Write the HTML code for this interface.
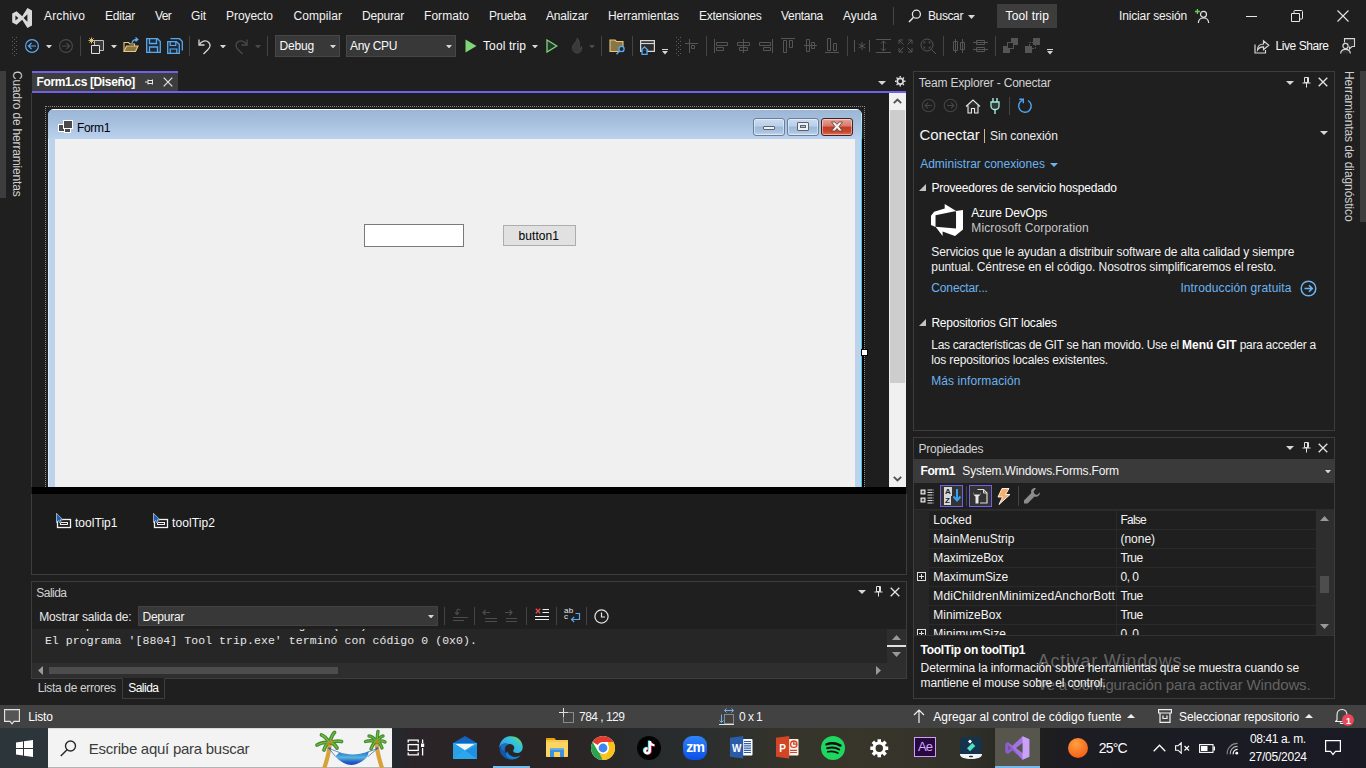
<!DOCTYPE html>
<html lang="es"><head><meta charset="utf-8"><title>Tool trip - Microsoft Visual Studio</title>
<style>
html,body{margin:0;padding:0;}
body{width:1366px;height:768px;overflow:hidden;background:#1f1f1f;position:relative;font-family:"Liberation Sans",sans-serif;}
.t{position:absolute;white-space:pre;line-height:1;display:block;}
.r{position:absolute;display:block;box-sizing:border-box;}
</style></head><body>
<svg class="r" style="left:11px;top:7px;" width="22" height="22" viewBox="0 0 22 22"><path d="M1.2 6.6 L5.6 4.2 L11.2 9.2 L16.4 1 L21 3.6 V18.4 L16.4 21 L11.2 12.8 L5.6 17.8 L1.2 15.4 Z M4.4 8.4 V13.6 L7.4 11 Z M16.4 7.2 L12.6 11 L16.4 14.8 Z" fill="#d9d9d9" fill-rule="evenodd"/></svg>
<span class="t" style="left:44.0px;top:10px;font-size:12px;color:#f2f2f2;letter-spacing:0.141px;">Archivo</span>
<span class="t" style="left:105.0px;top:10px;font-size:12px;color:#f2f2f2;letter-spacing:-0.225px;">Editar</span>
<span class="t" style="left:155.0px;top:10px;font-size:12px;color:#f2f2f2;letter-spacing:-0.671px;">Ver</span>
<span class="t" style="left:191.0px;top:10px;font-size:12px;color:#f2f2f2;letter-spacing:-0.111px;">Git</span>
<span class="t" style="left:226.0px;top:10px;font-size:12px;color:#f2f2f2;letter-spacing:-0.045px;">Proyecto</span>
<span class="t" style="left:293.5px;top:10px;font-size:12px;color:#f2f2f2;letter-spacing:0.061px;">Compilar</span>
<span class="t" style="left:362.0px;top:10px;font-size:12px;color:#f2f2f2;letter-spacing:-0.193px;">Depurar</span>
<span class="t" style="left:424.0px;top:10px;font-size:12px;color:#f2f2f2;letter-spacing:0.046px;">Formato</span>
<span class="t" style="left:489.0px;top:10px;font-size:12px;color:#f2f2f2;letter-spacing:-0.283px;">Prueba</span>
<span class="t" style="left:546.0px;top:10px;font-size:12px;color:#f2f2f2;letter-spacing:-0.169px;">Analizar</span>
<span class="t" style="left:608.0px;top:10px;font-size:12px;color:#f2f2f2;letter-spacing:-0.085px;">Herramientas</span>
<span class="t" style="left:699.0px;top:10px;font-size:12px;color:#f2f2f2;letter-spacing:-0.261px;">Extensiones</span>
<span class="t" style="left:781.0px;top:10px;font-size:12px;color:#f2f2f2;letter-spacing:-0.292px;">Ventana</span>
<span class="t" style="left:843.0px;top:10px;font-size:12px;color:#f2f2f2;letter-spacing:0.038px;">Ayuda</span>
<div class="r" style="left:893px;top:7px;width:1px;height:18px;background:#464646;"></div>
<svg class="r" style="left:908px;top:9px;" width="14" height="14" viewBox="0 0 14 14"><circle cx="8.4" cy="5.2" r="4" fill="none" stroke="#e6e6e6" stroke-width="1.3"/><path d="M5.6 8.2 L1 13" stroke="#e6e6e6" stroke-width="1.5"/></svg>
<span class="t" style="left:928.0px;top:10px;font-size:12px;color:#f2f2f2;letter-spacing:-0.391px;">Buscar</span>
<svg class="r" style="left:967.5px;top:15.0px;" width="7" height="4" viewBox="0 0 7 4"><path d="M0 0H7L3.5 4Z" fill="#d8d8d8"/></svg>
<div class="r" style="left:997px;top:4px;width:60px;height:24px;background:#3d3d3d;"></div>
<span class="t" style="left:1005.5px;top:10px;font-size:12px;color:#ffffff;letter-spacing:0.165px;">Tool trip</span>
<span class="t" style="left:1119.0px;top:10px;font-size:12px;color:#f2f2f2;letter-spacing:-0.145px;">Iniciar sesión</span>
<svg class="r" style="left:1194px;top:8px;" width="16" height="16" viewBox="0 0 16 16"><circle cx="9.5" cy="6.3" r="3" fill="none" stroke="#e0e0e0" stroke-width="1.2"/><path d="M4.3 15 C4.6 11.2 7 10 9.5 10 C12 10 14.4 11.2 14.7 15" fill="none" stroke="#e0e0e0" stroke-width="1.2"/><path d="M3.4 1 V6 M0.9 3.5 H5.9" stroke="#6ccb5f" stroke-width="1.3"/></svg>
<div class="r" style="left:1246px;top:16px;width:11px;height:1px;background:#e6e6e6;"></div>
<svg class="r" style="left:1291px;top:10px;" width="12" height="12" viewBox="0 0 12 12"><path d="M0.5 3.5 H8.5 V11.5 H0.5 Z" fill="none" stroke="#e6e6e6"/><path d="M3 3.5 V1.2 Q3 0.5 3.8 0.5 H10.5 Q11.5 0.5 11.5 1.5 V8.2 Q11.5 9 10.8 9 H8.6" fill="none" stroke="#e6e6e6"/></svg>
<svg class="r" style="left:1337px;top:10px;" width="12" height="12" viewBox="0 0 12 12"><path d="M0.5 0.5 L11.5 11.5 M11.5 0.5 L0.5 11.5" stroke="#e6e6e6" stroke-width="1.1"/></svg>
<svg class="r" style="left:12px;top:37px;" width="6" height="20" viewBox="0 0 6 20"><rect x="0" y="0" width="1" height="1" fill="#5c5c5c"/><rect x="2" y="2" width="1" height="1" fill="#5c5c5c"/><rect x="4" y="0" width="1" height="1" fill="#5c5c5c"/><rect x="0" y="4" width="1" height="1" fill="#5c5c5c"/><rect x="2" y="6" width="1" height="1" fill="#5c5c5c"/><rect x="4" y="4" width="1" height="1" fill="#5c5c5c"/><rect x="0" y="8" width="1" height="1" fill="#5c5c5c"/><rect x="2" y="10" width="1" height="1" fill="#5c5c5c"/><rect x="4" y="8" width="1" height="1" fill="#5c5c5c"/><rect x="0" y="12" width="1" height="1" fill="#5c5c5c"/><rect x="2" y="14" width="1" height="1" fill="#5c5c5c"/><rect x="4" y="12" width="1" height="1" fill="#5c5c5c"/><rect x="0" y="16" width="1" height="1" fill="#5c5c5c"/><rect x="2" y="18" width="1" height="1" fill="#5c5c5c"/><rect x="4" y="16" width="1" height="1" fill="#5c5c5c"/></svg>
<svg class="r" style="left:24px;top:38px;" width="16" height="16" viewBox="0 0 16 16"><circle cx="8" cy="8" r="6.4" fill="none" stroke="#58a9f0" stroke-width="1.2"/><path d="M12 8H4.6M7.6 4.8L4.4 8L7.6 11.2" fill="none" stroke="#58a9f0" stroke-width="1.2"/></svg>
<svg class="r" style="left:46.0px;top:44.75px;" width="6" height="3.5" viewBox="0 0 6 3.5"><path d="M0 0H6L3.0 3.5Z" fill="#d6d6d6"/></svg>
<svg class="r" style="left:58px;top:38px;" width="16" height="16" viewBox="0 0 16 16"><circle cx="8" cy="8" r="6.4" fill="none" stroke="#4a4a4a" stroke-width="1.1"/><path d="M4 8H11.4M8.4 4.8L11.6 8L8.4 11.2" fill="none" stroke="#4a4a4a" stroke-width="1.1"/></svg>
<div class="r" style="left:80px;top:36px;width:1px;height:20px;background:#444444;"></div>
<svg class="r" style="left:88px;top:37px;" width="18" height="18" viewBox="0 0 18 18"><path d="M6.5 3.5H15.5V13.500H6.5Z" fill="#3a3a3a" stroke="#bdbdbd"/><path d="M3.5 8.500H11.500V16.5H3.5Z" fill="#2b2b2b" stroke="#e0e0e0"/><path d="M3.5 0.500V6.500M0.500 3.500H6.500M1.400 1.400L5.600 5.600M5.600 1.400L1.400 5.600" stroke="#f2d27a" stroke-width="0.900"/></svg>
<svg class="r" style="left:111.0px;top:44.75px;" width="6" height="3.5" viewBox="0 0 6 3.5"><path d="M0 0H6L3.0 3.5Z" fill="#d6d6d6"/></svg>
<svg class="r" style="left:123px;top:37px;" width="17" height="17" viewBox="0 0 17 17"><path d="M1 14.500V5.500H5.500L7 7H11.500V9" fill="none" stroke="#e8c77b" stroke-width="1.1"/><path d="M1 14.500L3.500 9H15L12.500 14.500Z" fill="#8a7546" stroke="#e8c77b" stroke-width="1.1"/><path d="M9 6.500C9 3.500 11.500 2.500 14.500 2.500M12.500 0.500L14.800 2.500L12.500 4.600" fill="none" stroke="#58a9f0" stroke-width="1.3"/></svg>
<svg class="r" style="left:146px;top:38px;" width="15" height="15" viewBox="0 0 15 15"><path d="M0.700 0.700H11.500L14.300 3.500V14.300H0.700Z" fill="#1f2a36" stroke="#58a9f0" stroke-width="1.300"/><path d="M3.500 0.700V5.500H10.500V0.700M3.500 14.300V9H11.500V14.300" fill="none" stroke="#58a9f0" stroke-width="1.300"/></svg>
<svg class="r" style="left:167px;top:38px;" width="16" height="16" viewBox="0 0 16 16"><path d="M0.700 3.700H9.500L12.300 6.300V15.300H0.700Z" fill="#1f2a36" stroke="#58a9f0" stroke-width="1.300"/><path d="M3.200 3.700V7.500H8.800V3.700M3.200 15.300V11H9.800V15.300" fill="none" stroke="#58a9f0" stroke-width="1.200"/><path d="M3.500 0.700H12.500L15.300 3.500V12.500" fill="none" stroke="#58a9f0" stroke-width="1.300"/></svg>
<div class="r" style="left:189px;top:36px;width:1px;height:20px;background:#444444;"></div>
<svg class="r" style="left:197px;top:38px;" width="16" height="17" viewBox="0 0 16 17"><path d="M2 1.500V7H7.500" fill="none" stroke="#d6d6d6" stroke-width="1.300"/><path d="M2.300 6.800C4 3 9 1.500 11.800 4.500C14 7 13 9.500 11 11.500L6.500 16" fill="none" stroke="#d6d6d6" stroke-width="1.300"/></svg>
<svg class="r" style="left:219.5px;top:44.75px;" width="6" height="3.5" viewBox="0 0 6 3.5"><path d="M0 0H6L3.0 3.5Z" fill="#d6d6d6"/></svg>
<svg class="r" style="left:233px;top:38px;" width="16" height="17" viewBox="0 0 16 17"><path d="M14 1.500V7H8.500" fill="none" stroke="#4a4a4a" stroke-width="1.300"/><path d="M13.700 6.800C12 3 7 1.500 4.200 4.500C2 7 3 9.500 5 11.500L9.500 16" fill="none" stroke="#4a4a4a" stroke-width="1.300"/></svg>
<svg class="r" style="left:254.5px;top:44.75px;" width="6" height="3.5" viewBox="0 0 6 3.5"><path d="M0 0H6L3.0 3.5Z" fill="#4a4a4a"/></svg>
<div class="r" style="left:267px;top:36px;width:1px;height:20px;background:#444444;"></div>
<div class="r" style="left:275px;top:35px;width:65px;height:22px;background:#383838;border:1px solid #474747;"></div>
<span class="t" style="left:279.5px;top:40px;font-size:12px;color:#fafafa;letter-spacing:-0.172px;">Debug</span>
<svg class="r" style="left:330.0px;top:44.75px;" width="6" height="3.5" viewBox="0 0 6 3.5"><path d="M0 0H6L3.0 3.5Z" fill="#d6d6d6"/></svg>
<div class="r" style="left:346px;top:35px;width:110px;height:22px;background:#383838;border:1px solid #474747;"></div>
<span class="t" style="left:350.0px;top:40px;font-size:12px;color:#fafafa;letter-spacing:-0.335px;">Any CPU</span>
<svg class="r" style="left:446.0px;top:44.75px;" width="6" height="3.5" viewBox="0 0 6 3.5"><path d="M0 0H6L3.0 3.5Z" fill="#d6d6d6"/></svg>
<svg class="r" style="left:465px;top:39px;" width="12" height="14" viewBox="0 0 12 14"><path d="M0.500 0.500L11.500 7L0.500 13.500Z" fill="#7fd67a"/></svg>
<span class="t" style="left:483.0px;top:40px;font-size:12px;color:#fafafa;letter-spacing:0.109px;">Tool trip</span>
<svg class="r" style="left:532.0px;top:44.75px;" width="6" height="3.5" viewBox="0 0 6 3.5"><path d="M0 0H6L3.0 3.5Z" fill="#d6d6d6"/></svg>
<svg class="r" style="left:546px;top:39px;" width="12" height="14" viewBox="0 0 12 14"><path d="M1 1L10.800 7L1 13Z" fill="#23372a" stroke="#7fd67a" stroke-width="1.300"/></svg>
<svg class="r" style="left:568px;top:37px;" width="16" height="17" viewBox="0 0 16 17"><path d="M9 1C10 4 5 6 4.500 10C4 14 7 16 9 16C12 16 14.500 13.500 13.500 9.500C13 11 12 11.500 11 11.500C12 8 12 4 9 1Z" fill="#3a3a3a" stroke="#4a4a4a" stroke-width="0.800"/></svg>
<svg class="r" style="left:589.0px;top:44.75px;" width="6" height="3.5" viewBox="0 0 6 3.5"><path d="M0 0H6L3.0 3.5Z" fill="#4a4a4a"/></svg>
<div class="r" style="left:601px;top:36px;width:1px;height:20px;background:#444444;"></div>
<svg class="r" style="left:609px;top:38px;" width="17" height="17" viewBox="0 0 17 17"><path d="M1 13.500V2H6L7.500 3.500H14V13.500Z" fill="#8a7546" stroke="#e8c77b" stroke-width="1.100"/><circle cx="12.500" cy="11" r="2.600" fill="#1f2a36" stroke="#58a9f0" stroke-width="1.300"/><path d="M10.600 13L7.500 16.300" stroke="#58a9f0" stroke-width="1.400"/></svg>
<div class="r" style="left:632px;top:36px;width:1px;height:20px;background:#444444;"></div>
<svg class="r" style="left:640px;top:40px;" width="15" height="15" viewBox="0 0 15 15"><path d="M0.600 0.600H14.400V11.400H0.600Z" fill="#2b2b2b" stroke="#d6d6d6" stroke-width="1.200"/><path d="M0.600 3.500H14.400" stroke="#d6d6d6" stroke-width="1.200"/><path d="M0.800 10.500L4.500 7L8.200 10.500M2 10V14.300H7V10" fill="#1f1f1f" stroke="#58a9f0" stroke-width="1.300"/></svg>
<div class="r" style="left:662px;top:49px;width:6px;height:1px;background:#d6d6d6;"></div>
<svg class="r" style="left:662.0px;top:51.25px;" width="6" height="3.5" viewBox="0 0 6 3.5"><path d="M0 0H6L3.0 3.5Z" fill="#d6d6d6"/></svg>
<svg class="r" style="left:676px;top:37px;" width="6" height="20" viewBox="0 0 6 20"><rect x="0" y="0" width="1" height="1" fill="#5c5c5c"/><rect x="2" y="2" width="1" height="1" fill="#5c5c5c"/><rect x="4" y="0" width="1" height="1" fill="#5c5c5c"/><rect x="0" y="4" width="1" height="1" fill="#5c5c5c"/><rect x="2" y="6" width="1" height="1" fill="#5c5c5c"/><rect x="4" y="4" width="1" height="1" fill="#5c5c5c"/><rect x="0" y="8" width="1" height="1" fill="#5c5c5c"/><rect x="2" y="10" width="1" height="1" fill="#5c5c5c"/><rect x="4" y="8" width="1" height="1" fill="#5c5c5c"/><rect x="0" y="12" width="1" height="1" fill="#5c5c5c"/><rect x="2" y="14" width="1" height="1" fill="#5c5c5c"/><rect x="4" y="12" width="1" height="1" fill="#5c5c5c"/><rect x="0" y="16" width="1" height="1" fill="#5c5c5c"/><rect x="2" y="18" width="1" height="1" fill="#5c5c5c"/><rect x="4" y="16" width="1" height="1" fill="#5c5c5c"/></svg>
<svg class="r" style="left:685px;top:39px;" width="13" height="14" viewBox="0 0 13 14"><path d="M0 4.500H13M4.500 0V14M6.500 6.500H9.500V9.500H6.500Z" fill="none" stroke="#555555"/></svg>
<div class="r" style="left:706px;top:36px;width:1px;height:20px;background:#444444;"></div>
<svg class="r" style="left:714px;top:39px;" width="15" height="14" viewBox="0 0 15 14"><path d="M0.500 0V14M2.500 3.500H13.500V6.500H2.500ZM2.500 8.500H9.500V11.500H2.500Z" fill="none" stroke="#555555"/></svg>
<svg class="r" style="left:737px;top:39px;" width="13" height="14" viewBox="0 0 13 14"><path d="M6.500 0V14M0.500 3.500H12.500V6.500H0.500ZM2.500 8.500H10.500V11.500H2.500Z" fill="none" stroke="#555555"/></svg>
<svg class="r" style="left:758px;top:39px;" width="15" height="14" viewBox="0 0 15 14"><path d="M14.500 0V14M1.500 3.500H12.500V6.500H1.500ZM5.500 8.500H12.500V11.500H5.500Z" fill="none" stroke="#555555"/></svg>
<svg class="r" style="left:781px;top:38px;" width="14" height="15" viewBox="0 0 14 15"><path d="M0 0.500H14M2.500 2.500H5.500V14.500H2.500ZM8.500 2.500H11.500V9.500H8.500Z" fill="none" stroke="#555555"/></svg>
<svg class="r" style="left:804px;top:39px;" width="13" height="13" viewBox="0 0 13 13"><path d="M0 6.500H13M2.500 0.500H5.500V12.500H2.500ZM7.500 3.500H10.500V9.500H7.500Z" fill="none" stroke="#555555"/></svg>
<svg class="r" style="left:825px;top:38px;" width="14" height="15" viewBox="0 0 14 15"><path d="M0 14.500H14M2.500 0.500H5.500V12.500H2.500ZM8.500 5.500H11.500V12.500H8.500Z" fill="none" stroke="#555555"/></svg>
<div class="r" style="left:847px;top:36px;width:1px;height:20px;background:#444444;"></div>
<svg class="r" style="left:854px;top:39px;" width="16" height="14" viewBox="0 0 16 14"><path d="M0.500 1V13M15.500 1V13M8 3V11M4.600 5L11.400 9M11.400 5L4.600 9" fill="none" stroke="#555555"/></svg>
<svg class="r" style="left:876px;top:39px;" width="15" height="14" viewBox="0 0 15 14"><path d="M0 0.500H15M0 13.500H15M7.500 2V12M5 4.500L7.500 2L10 4.500M5 9.500L7.500 12L10 9.500" fill="none" stroke="#555555"/></svg>
<svg class="r" style="left:898px;top:39px;" width="15" height="14" viewBox="0 0 15 14"><path d="M1 5V1H5M10 1H14V5M14 9V13H10M5 13H1V9M1 1L5.500 5.500M14 1L9.500 5.500M14 13L9.500 8.500M1 13L5.500 8.500" fill="none" stroke="#555555"/></svg>
<svg class="r" style="left:920px;top:38px;" width="17" height="17" viewBox="0 0 17 17"><circle cx="7" cy="7" r="6" fill="none" stroke="#555555"/><path d="M4 5.500V4H5.500M8.500 4H10V5.500M10 8.500V10H8.500M5.500 10H4V8.500M11.500 11.500L16 16" fill="none" stroke="#555555"/></svg>
<div class="r" style="left:943px;top:36px;width:1px;height:20px;background:#444444;"></div>
<svg class="r" style="left:952px;top:39px;" width="14" height="14" viewBox="0 0 14 14"><path d="M3.500 0V14M10.500 0V14M1.500 2.500H5.500V11.500H1.500ZM8.500 3.500H12.500V10.500H8.500Z" fill="none" stroke="#555555"/></svg>
<svg class="r" style="left:973px;top:39px;" width="15" height="14" viewBox="0 0 15 14"><path d="M0 3.500H15M0 10.500H15M3.500 1.500H11.500V5.500H3.500ZM3.500 8.500H11.500V12.500H3.500Z" fill="none" stroke="#555555"/></svg>
<div class="r" style="left:995px;top:36px;width:1px;height:20px;background:#444444;"></div>
<svg class="r" style="left:1003px;top:38px;" width="15" height="15" viewBox="0 0 15 15"><rect x="8" y="0" width="7" height="7" fill="#555555"/><rect x="0" y="8" width="7" height="7" fill="#555555"/><rect x="4.500" y="4.500" width="6" height="6" fill="#1f1f1f" stroke="#555555"/></svg>
<svg class="r" style="left:1025px;top:38px;" width="15" height="15" viewBox="0 0 15 15"><rect x="8" y="0" width="7" height="7" fill="#555555"/><rect x="0" y="8" width="7" height="7" fill="#555555"/><path d="M4.500 8V4.500H8M7 10.500H10.500V7" fill="none" stroke="#555555" stroke-dasharray="2 1"/></svg>
<div class="r" style="left:1047px;top:49px;width:6px;height:1px;background:#d6d6d6;"></div>
<svg class="r" style="left:1047.0px;top:51.25px;" width="6" height="3.5" viewBox="0 0 6 3.5"><path d="M0 0H6L3.0 3.5Z" fill="#d6d6d6"/></svg>
<svg class="r" style="left:1254px;top:39px;" width="16" height="15" viewBox="0 0 16 15"><path d="M1 5.500V14H11.500V11" fill="none" stroke="#d6d6d6" stroke-width="1.200"/><path d="M3.500 11C3.500 7 6 5 9.500 5V1.800L14.800 6.300L9.500 10.800V7.800C7 7.800 5 8.500 3.500 11Z" fill="#2b2b2b" stroke="#d6d6d6" stroke-width="1.200"/></svg>
<span class="t" style="left:1275.5px;top:40px;font-size:12px;color:#fafafa;letter-spacing:-0.437px;">Live Share</span>
<svg class="r" style="left:1340px;top:38px;" width="16" height="16" viewBox="0 0 16 16"><path d="M4.500 4.500V0.600H14.500V8.500H12L9.500 11V8.500" fill="#2b2b2b" stroke="#d6d6d6" stroke-width="1.100"/><circle cx="5.500" cy="8" r="2.600" fill="#1f1f1f" stroke="#d6d6d6" stroke-width="1.200"/><path d="M0.600 15.500C0.800 12.500 3 11.300 5.500 11.300C8 11.300 10.200 12.500 10.400 15.500" fill="#2b2b2b" stroke="#d6d6d6" stroke-width="1.200"/></svg>
<div class="r" style="left:0px;top:71px;width:6px;height:127px;background:#3d3d3d;"></div>
<div class="t" style="left:10px;top:71px;width:14px;height:127px;writing-mode:vertical-rl;font-size:12px;line-height:14px;color:#cfcfcf;letter-spacing:-0.177px;">Cuadro de herramientas</div>
<div class="r" style="left:32px;top:71px;width:146px;height:22px;background:#3d3d3d;border-top:2px solid #7160e8;"></div>
<span class="t" style="left:36.5px;top:76px;font-size:12px;color:#ffffff;letter-spacing:-0.364px;font-weight:bold;">Form1.cs [Diseño]</span>
<svg class="r" style="left:145px;top:78px;" width="9" height="8" viewBox="0 0 9 8"><path d="M0 4H3M3 1.500V6.500M3 2.500H7.500V5.500H3M7.500 1.500V6.500" fill="none" stroke="#e6e6e6" stroke-width="1"/></svg>
<svg class="r" style="left:163px;top:77px;" width="10" height="10" viewBox="0 0 10 10"><path d="M0.700 0.700L9.300 9.300M9.300 0.700L0.700 9.300" stroke="#e6e6e6" stroke-width="1.200"/></svg>
<div class="r" style="left:32px;top:91px;width:874px;height:2px;background:#7160e8;"></div>
<svg class="r" style="left:877.5px;top:80.5px;" width="8" height="4" viewBox="0 0 8 4"><path d="M0 0H8L4.0 4Z" fill="#d6d6d6"/></svg>
<svg class="r" style="left:895px;top:76px;" width="10.5" height="10.5" viewBox="0 0 12 12"><circle cx="6" cy="6" r="3.300" fill="none" stroke="#dcdcdc" stroke-width="2"/><path d="M6 0V12M0 6H12M1.800 1.800L10.200 10.200M10.200 1.800L1.800 10.200" stroke="#dcdcdc" stroke-width="1.600" stroke-dasharray="1.800 8.400 1.800 0"/><circle cx="6" cy="6" r="1.500" fill="#1f1f1f"/></svg>
<div class="r" style="left:31px;top:93px;width:858px;height:394px;background:#1e1e1e;border-left:1px solid #3d3d3d;"></div>
<div class="r" style="left:45px;top:106px;width:820px;height:390px;background:transparent;border:1px dotted #8a8a8a;border-bottom:none;height:381px;"></div>
<div class="r" style="left:48px;top:109px;width:814px;height:378px;background:#bdd3ec;border-top-left-radius:6px;border-top-right-radius:6px;overflow:hidden;"><div class="r" style="left:0;top:0;width:814px;height:30px;background:linear-gradient(#9cb6d6 0%,#a7c0de 45%,#bad2ee 100%);border-top:1px solid #ffffff;"></div><div class="r" style="left:0;top:30px;width:1px;height:348px;background:#dce9f7;"></div><div class="r" style="left:813px;top:4px;width:1px;height:374px;background:linear-gradient(#bfeaf9 0px,#6ad6f3 26px,#35c7ea 27px);"></div><div class="r" style="left:7px;top:30px;width:800px;height:348px;background:#f0f0f0;"></div></div>
<div class="r" style="left:862px;top:139px;width:2px;height:348px;background:#000000;"></div>
<svg class="r" style="left:58px;top:120px;" width="15" height="13" viewBox="0 0 15 13"><rect x="0.500" y="4.500" width="6" height="7" fill="#4a4a4a" stroke="#ffffff"/><rect x="5.500" y="0.500" width="9" height="8" fill="#4a4a4a" stroke="#ffffff"/><rect x="6.500" y="8.500" width="6" height="4" fill="#4a4a4a" stroke="#ffffff"/></svg>
<span class="t" style="left:77.0px;top:122px;font-size:12px;color:#000000;letter-spacing:-0.334px;">Form1</span>
<div class="r" style="left:753px;top:118px;width:32px;height:18px;background:linear-gradient(#c9dcf2 0%,#b9cfe9 45%,#9db8d9 50%,#a9c2e0 80%,#c3d7ef 100%);border:1px solid #6c7f99;border-radius:3px;box-shadow:inset 0 0 0 1px rgba(255,255,255,0.45);"></div>
<div class="r" style="left:787px;top:118px;width:32px;height:18px;background:linear-gradient(#c9dcf2 0%,#b9cfe9 45%,#9db8d9 50%,#a9c2e0 80%,#c3d7ef 100%);border:1px solid #6c7f99;border-radius:3px;box-shadow:inset 0 0 0 1px rgba(255,255,255,0.45);"></div>
<div class="r" style="left:821px;top:118px;width:32px;height:18px;background:linear-gradient(#e3a79b 0%,#d6776a 45%,#c23b22 50%,#c8482e 80%,#d9735c 100%);border:1px solid #4a1c1c;border-radius:3px;box-shadow:inset 0 0 0 1px rgba(255,255,255,0.45);"></div>
<div class="r" style="left:763px;top:126px;width:12px;height:4px;background:#f0f0f0;border:1px solid #5a6170;border-radius:1px;"></div>
<div class="r" style="left:797px;top:122px;width:12px;height:9px;background:#f0f0f0;border:1px solid #5a6170;border-radius:1px;"></div>
<div class="r" style="left:800px;top:125px;width:6px;height:3px;background:#a9c2e0;border:1px solid #5a6170;"></div>
<svg class="r" style="left:830px;top:121px;" width="14" height="11" viewBox="0 0 14 11"><path d="M1.500 1L5 1L7 3.400L9 1L12.500 1L9 5.500L12.500 10L9 10L7 7.600L5 10L1.500 10L5 5.500Z" fill="#f4f4f4" stroke="#5c3a3a" stroke-width="0.800"/></svg>
<div class="r" style="left:364px;top:224px;width:100px;height:23px;background:#ffffff;border:1px solid #7a7a7a;"></div>
<div class="r" style="left:503px;top:225px;width:73px;height:21px;background:#e1e1e1;border:1px solid #adadad;"></div>
<span class="t" style="left:518.5px;top:230px;font-size:12px;color:#000000;letter-spacing:0.066px;">button1</span>
<div class="r" style="left:861px;top:349px;width:7px;height:7px;background:#ffffff;border:1px solid #000000;"></div>
<div class="r" style="left:889px;top:93px;width:17px;height:394px;background:#f0f0f0;"></div>
<div class="r" style="left:890px;top:110px;width:15px;height:273px;background:#cdcdcd;"></div>
<svg class="r" style="left:893px;top:98px;" width="9" height="6" viewBox="0 0 9 6"><path d="M0.800 5.200L4.500 1.500L8.200 5.200" fill="none" stroke="#505050" stroke-width="1.800"/></svg>
<svg class="r" style="left:893px;top:476px;" width="9" height="6" viewBox="0 0 9 6"><path d="M0.800 0.800L4.500 4.500L8.200 0.800" fill="none" stroke="#505050" stroke-width="1.800"/></svg>
<div class="r" style="left:32px;top:487px;width:874px;height:7px;background:#000000;"></div>
<div class="r" style="left:31px;top:494px;width:876px;height:81px;background:#1c1c1c;border-left:1px solid #3d3d3d;border-bottom:1px solid #3d3d3d;border-right:1px solid #3d3d3d;"></div>
<svg class="r" style="left:56px;top:513px;" width="16" height="16" viewBox="0 0 16 16"><rect x="1.500" y="6.500" width="13" height="8" fill="#1c1c1c" stroke="#f2f2f2" stroke-width="1.300"/><rect x="4.500" y="9.500" width="7" height="2" fill="none" stroke="#f2f2f2" stroke-width="1"/><path d="M0.500 0.300V9.500L2.600 7.600L4 10.300L5.400 9.600L4.100 7L7 6.800Z" fill="#1d5fb4" stroke="#f2f2f2" stroke-width="0.600"/></svg>
<span class="t" style="left:75.0px;top:517px;font-size:12px;color:#fafafa;letter-spacing:0.032px;">toolTip1</span>
<svg class="r" style="left:153px;top:513px;" width="16" height="16" viewBox="0 0 16 16"><rect x="1.500" y="6.500" width="13" height="8" fill="#1c1c1c" stroke="#f2f2f2" stroke-width="1.300"/><rect x="4.500" y="9.500" width="7" height="2" fill="none" stroke="#f2f2f2" stroke-width="1"/><path d="M0.500 0.300V9.500L2.600 7.600L4 10.300L5.400 9.600L4.100 7L7 6.800Z" fill="#1d5fb4" stroke="#f2f2f2" stroke-width="0.600"/></svg>
<span class="t" style="left:172.0px;top:517px;font-size:12px;color:#fafafa;letter-spacing:0.095px;">toolTip2</span>
<div class="r" style="left:31px;top:581px;width:876px;height:98px;background:#1f1f1f;border:1px solid #3d3d3d;"></div>
<span class="t" style="left:36.3px;top:587px;font-size:12px;color:#d2d2d2;letter-spacing:-0.526px;">Salida</span>
<svg class="r" style="left:857.5px;top:590.0px;" width="8" height="4" viewBox="0 0 8 4"><path d="M0 0H8L4.0 4Z" fill="#d6d6d6"/></svg>
<svg class="r" style="left:874px;top:586px;" width="9" height="11" viewBox="0 0 9 11"><path d="M2.500 0.500H6.500V5.500H2.500ZM5.500 0.500V5.500M0.500 6H8.500M4.500 6V10.500" fill="none" stroke="#e0e0e0" stroke-width="1"/></svg>
<svg class="r" style="left:890px;top:587px;" width="10" height="10" viewBox="0 0 10 10"><path d="M0.700 0.700L9.300 9.300M9.300 0.700L0.700 9.300" stroke="#e6e6e6" stroke-width="1.300"/></svg>
<span class="t" style="left:39.3px;top:611px;font-size:12px;color:#e8e8e8;letter-spacing:-0.176px;">Mostrar salida de:</span>
<div class="r" style="left:138px;top:606px;width:300px;height:20px;background:#383838;border:1px solid #434343;"></div>
<span class="t" style="left:142.5px;top:611px;font-size:12px;color:#f4f4f4;letter-spacing:-0.236px;">Depurar</span>
<svg class="r" style="left:427.5px;top:614.75px;" width="6" height="3.5" viewBox="0 0 6 3.5"><path d="M0 0H6L3.0 3.5Z" fill="#d6d6d6"/></svg>
<div class="r" style="left:444px;top:607px;width:1px;height:18px;background:#444444;"></div>
<div class="r" style="left:474px;top:607px;width:1px;height:18px;background:#444444;"></div>
<div class="r" style="left:526px;top:607px;width:1px;height:18px;background:#444444;"></div>
<div class="r" style="left:556px;top:607px;width:1px;height:18px;background:#444444;"></div>
<div class="r" style="left:586px;top:607px;width:1px;height:18px;background:#444444;"></div>
<svg class="r" style="left:453px;top:608px;" width="15" height="15" viewBox="0 0 15 15"><path d="M4 6V2.500C4 0.800 7 0.800 7 2.500M2 4.500L4 6.500L6 4.500M0 9.500H15M0 12.500H11" fill="none" stroke="#4c4c4c" stroke-width="1.200"/></svg>
<svg class="r" style="left:482px;top:609px;" width="15" height="14" viewBox="0 0 15 14"><path d="M1 3.500H8M3.500 1L1 3.500L3.500 6M3 9.500H15M3 12.500H15" fill="none" stroke="#4c4c4c" stroke-width="1.200"/></svg>
<svg class="r" style="left:504px;top:609px;" width="15" height="14" viewBox="0 0 15 14"><path d="M1 3.500H8M5.500 1L8 3.500L5.500 6M2 9.500H13M2 12.500H13" fill="none" stroke="#4c4c4c" stroke-width="1.200"/></svg>
<svg class="r" style="left:535px;top:608px;" width="15" height="15" viewBox="0 0 15 15"><path d="M7.500 1.500H14M7.500 4.500H14M0 8.500H14M0 11.500H14" stroke="#f0f0f0" stroke-width="1"/><path d="M0.800 0.800L5.200 5.200M5.200 0.800L0.800 5.200" stroke="#e5484d" stroke-width="1.400"/></svg>
<span class="t" style="left:564px;top:608px;font-size:8px;line-height:6px;color:#e8e8e8;letter-spacing:0.3px;">ab<br>c</span>
<svg class="r" style="left:570px;top:612px;" width="11" height="11" viewBox="0 0 11 11"><path d="M5.500 1.500H9.500V7.500H1.500M4.200 4.800L1.500 7.500L4.200 10.200" fill="none" stroke="#58a9f0" stroke-width="1.200"/></svg>
<svg class="r" style="left:594px;top:609px;" width="15" height="15" viewBox="0 0 15 15"><circle cx="7.500" cy="7.500" r="6.600" fill="none" stroke="#e8e8e8" stroke-width="1.200"/><path d="M7.500 3.500V8H11" fill="none" stroke="#e8e8e8" stroke-width="1.200"/></svg>
<div class="r" style="left:32px;top:629px;width:855px;height:34px;background:#262626;overflow:hidden;"></div>
<div class="r" style="left:32px;top:629px;width:855px;height:34px;overflow:hidden;">
<span class="t" style="left:12.9px;top:-9px;font-size:11.5px;color:#e6e6e6;letter-spacing:-0.045px;font-family:'Liberation Mono',monospace;">El subproceso 0x4f28 terminó con código 0 (0x0).</span>
<span class="t" style="left:12.9px;top:6px;font-size:11.5px;color:#e6e6e6;letter-spacing:0.068px;font-family:'Liberation Mono',monospace;">El programa '[8804] Tool trip.exe' terminó con código 0 (0x0).</span>
</div>
<div class="r" style="left:887px;top:629px;width:19px;height:34px;background:#2e2e2e;"></div>
<svg class="r" style="left:892px;top:635px;" width="9" height="5" viewBox="0 0 9 5"><path d="M0 5H9L4.500 0Z" fill="#999999"/></svg>
<div class="r" style="left:887px;top:645px;width:19px;height:2px;background:#e0e0e0;"></div>
<svg class="r" style="left:892px;top:652px;" width="9" height="5" viewBox="0 0 9 5"><path d="M0 0H9L4.500 5Z" fill="#999999"/></svg>
<div class="r" style="left:32px;top:663px;width:874px;height:15px;background:#2e2e2e;"></div>
<div class="r" style="left:49px;top:667px;width:289px;height:7px;background:#4d4d4d;"></div>
<svg class="r" style="left:38px;top:666px;" width="5" height="9" viewBox="0 0 5 9"><path d="M5 0V9L0 4.500Z" fill="#999999"/></svg>
<svg class="r" style="left:876px;top:666px;" width="5" height="9" viewBox="0 0 5 9"><path d="M0 0V9L5 4.500Z" fill="#999999"/></svg>
<span class="t" style="left:37.7px;top:682px;font-size:12px;color:#d2d2d2;letter-spacing:-0.336px;">Lista de errores</span>
<div class="r" style="left:122px;top:678px;width:43px;height:21px;background:#1f1f1f;border:1px solid #3d3d3d;border-top:1px solid #1f1f1f;"></div>
<span class="t" style="left:128.2px;top:682px;font-size:12px;color:#ffffff;letter-spacing:-0.509px;">Salida</span>
<div class="r" style="left:913px;top:71px;width:422px;height:360px;background:#1f1f1f;border:1px solid #3d3d3d;"></div>
<span class="t" style="left:918.8px;top:77px;font-size:12px;color:#d2d2d2;letter-spacing:-0.197px;">Team Explorer - Conectar</span>
<svg class="r" style="left:1286.0px;top:80.5px;" width="8" height="4" viewBox="0 0 8 4"><path d="M0 0H8L4.0 4Z" fill="#d6d6d6"/></svg>
<svg class="r" style="left:1302px;top:77px;" width="9" height="11" viewBox="0 0 9 11"><path d="M2.500 0.500H6.500V5.500H2.500ZM5.500 0.500V5.500M0.500 6H8.500M4.500 6V10.500" fill="none" stroke="#e0e0e0" stroke-width="1"/></svg>
<svg class="r" style="left:1318px;top:77px;" width="10" height="10" viewBox="0 0 10 10"><path d="M0.700 0.700L9.300 9.300M9.300 0.700L0.700 9.300" stroke="#e6e6e6" stroke-width="1.300"/></svg>
<svg class="r" style="left:921px;top:98px;" width="15" height="15" viewBox="0 0 15 15"><circle cx="7.500" cy="7.500" r="6.300" fill="none" stroke="#454545" stroke-width="1.100"/><path d="M11 7.500H4.300M7 4.600L4.100 7.500L7 10.400" fill="none" stroke="#454545" stroke-width="1.100"/></svg>
<svg class="r" style="left:943px;top:98px;" width="15" height="15" viewBox="0 0 15 15"><circle cx="7.500" cy="7.500" r="6.300" fill="none" stroke="#454545" stroke-width="1.100"/><path d="M4 7.500H10.700M8 4.600L10.900 7.500L8 10.400" fill="none" stroke="#454545" stroke-width="1.100"/></svg>
<svg class="r" style="left:965px;top:99px;" width="16" height="15" viewBox="0 0 16 15"><path d="M1 7.500L8 1L15 7.500M3 6.500V14H6.500V9.500H9.500V14H13V6.500" fill="#2f2f2f" stroke="#e8e8e8" stroke-width="1.100" stroke-linejoin="miter"/></svg>
<svg class="r" style="left:990px;top:98px;" width="10" height="16" viewBox="0 0 10 16"><path d="M3 0V4M7 0V4" stroke="#a8ecdc" stroke-width="1.400"/><path d="M1 4H9V8C9 10.500 7 11.500 5 11.500C3 11.500 1 10.500 1 8Z" fill="#2c3a38" stroke="#a8ecdc" stroke-width="1.300"/><path d="M5 11.500V16" stroke="#a8ecdc" stroke-width="1.400"/></svg>
<div class="r" style="left:1009px;top:97px;width:1px;height:18px;background:#444444;"></div>
<svg class="r" style="left:1017px;top:98px;" width="16" height="16" viewBox="0 0 16 16"><path d="M5.500 2.200A6.300 6.300 0 1 0 11 2.500" fill="none" stroke="#4ea4f2" stroke-width="1.400"/><path d="M2.300 1.200H6.300V5.200" fill="none" stroke="#4ea4f2" stroke-width="1.400"/></svg>
<span class="t" style="left:919.6px;top:127px;font-size:15px;color:#f4f4f4;letter-spacing:-0.096px;">Conectar</span>
<div class="r" style="left:984px;top:129px;width:1px;height:14px;background:#d6b48a;"></div>
<span class="t" style="left:990.0px;top:130px;font-size:12px;color:#ededed;letter-spacing:-0.076px;">Sin conexión</span>
<svg class="r" style="left:1319.5px;top:131.0px;" width="8" height="4" viewBox="0 0 8 4"><path d="M0 0H8L4.0 4Z" fill="#d6d6d6"/></svg>
<span class="t" style="left:920.2px;top:158px;font-size:12px;color:#6db3ef;letter-spacing:-0.001px;">Administrar conexiones</span>
<svg class="r" style="left:1050.0px;top:163.0px;" width="8" height="4" viewBox="0 0 8 4"><path d="M0 0H8L4.0 4Z" fill="#6db3ef"/></svg>
<svg class="r" style="left:919px;top:184px;" width="7" height="7" viewBox="0 0 7 7"><path d="M7 0V7H0Z" fill="#c4c4c4"/></svg>
<span class="t" style="left:931.4px;top:182px;font-size:12px;color:#ffffff;letter-spacing:-0.183px;">Proveedores de servicio hospedado</span>
<svg class="r" style="left:930px;top:204px;" width="34" height="32" viewBox="0.800 1 16.400 16"><path d="M17 4v9.740l-4 3.280-6.200-2.260V17l-3.510-4.590 10.230.800V4.440zm-3.410.490L7.850 1v2.290L2.580 4.840 1 6.870v4.610l2.260 1V6.570z" fill="#ffffff"/></svg>
<span class="t" style="left:971.3px;top:207px;font-size:12px;color:#ffffff;letter-spacing:-0.194px;">Azure DevOps</span>
<span class="t" style="left:971.3px;top:222px;font-size:12px;color:#c8c8c8;letter-spacing:0.138px;">Microsoft Corporation</span>
<span class="t" style="left:931.3px;top:246px;font-size:12px;color:#f2f2f2;letter-spacing:-0.112px;">Servicios que le ayudan a distribuir software de alta calidad y siempre</span>
<span class="t" style="left:931.3px;top:261px;font-size:12px;color:#f2f2f2;letter-spacing:-0.067px;">puntual. Céntrese en el código. Nosotros simplificaremos el resto.</span>
<span class="t" style="left:931.3px;top:282px;font-size:12px;color:#6db3ef;letter-spacing:-0.139px;">Conectar...</span>
<span class="t" style="left:1180.4px;top:282px;font-size:12px;color:#6db3ef;letter-spacing:0.113px;">Introducción gratuita</span>
<svg class="r" style="left:1300px;top:280px;" width="17" height="17" viewBox="0 0 17 17"><circle cx="8.500" cy="8.500" r="7.300" fill="none" stroke="#6db3ef" stroke-width="1.500"/><path d="M4.500 8.500H12M9 5.200L12.300 8.500L9 11.800" fill="none" stroke="#6db3ef" stroke-width="1.600"/></svg>
<svg class="r" style="left:919px;top:319px;" width="7" height="7" viewBox="0 0 7 7"><path d="M7 0V7H0Z" fill="#c4c4c4"/></svg>
<span class="t" style="left:931.4px;top:317px;font-size:12px;color:#ffffff;letter-spacing:-0.212px;">Repositorios GIT locales</span>
<span class="t" style="left:931.3px;top:339px;font-size:12px;color:#f2f2f2;letter-spacing:-0.297px;">Las características de GIT se han movido. Use el </span>
<span class="t" style="left:1182.0px;top:339px;font-size:12px;color:#ffffff;letter-spacing:-0.008px;font-weight:bold;">Menú GIT</span>
<span class="t" style="left:1236.6px;top:339px;font-size:12px;color:#f2f2f2;letter-spacing:-0.279px;"> para acceder a</span>
<span class="t" style="left:931.3px;top:354px;font-size:12px;color:#f2f2f2;letter-spacing:-0.150px;">los repositorios locales existentes.</span>
<span class="t" style="left:931.3px;top:375px;font-size:12px;color:#6db3ef;letter-spacing:0.078px;">Más información</span>
<div class="t" style="left:1342px;top:71px;width:14px;height:160px;writing-mode:vertical-rl;font-size:12px;line-height:14px;color:#cfcfcf;letter-spacing:-0.083px;">Herramientas de diagnóstico</div>
<div class="r" style="left:1360px;top:71px;width:6px;height:151px;background:#3d3d3d;"></div>
<div class="r" style="left:913px;top:437px;width:422px;height:262px;background:#1f1f1f;border:1px solid #3d3d3d;"></div>
<span class="t" style="left:918.5px;top:443px;font-size:12px;color:#d2d2d2;letter-spacing:-0.235px;">Propiedades</span>
<svg class="r" style="left:1286.0px;top:446.0px;" width="8" height="4" viewBox="0 0 8 4"><path d="M0 0H8L4.0 4Z" fill="#d6d6d6"/></svg>
<svg class="r" style="left:1302px;top:442px;" width="9" height="11" viewBox="0 0 9 11"><path d="M2.500 0.500H6.500V5.500H2.500ZM5.500 0.500V5.500M0.500 6H8.500M4.500 6V10.500" fill="none" stroke="#e0e0e0" stroke-width="1"/></svg>
<svg class="r" style="left:1318px;top:443px;" width="10" height="10" viewBox="0 0 10 10"><path d="M0.700 0.700L9.300 9.300M9.300 0.700L0.700 9.300" stroke="#e6e6e6" stroke-width="1.300"/></svg>
<div class="r" style="left:914px;top:459px;width:420px;height:24px;background:#3a3a3a;"></div>
<span class="t" style="left:920.5px;top:465px;font-size:12px;color:#ffffff;letter-spacing:-0.435px;font-weight:bold;">Form1</span>
<span class="t" style="left:962.3px;top:465px;font-size:12px;color:#f4f4f4;letter-spacing:-0.163px;">System.Windows.Forms.Form</span>
<svg class="r" style="left:1324.5px;top:469.75px;" width="6" height="3.5" viewBox="0 0 6 3.5"><path d="M0 0H6L3.0 3.5Z" fill="#d6d6d6"/></svg>
<svg class="r" style="left:920px;top:489px;" width="16" height="15" viewBox="0 0 16 15"><path d="M0.500 0.500H5.500V5.500H0.500ZM0.500 8.500H5.500V13.500H0.500Z" fill="#e6e6e6"/><path d="M3 1.500V4.500M1.500 3H4.500M3 9.500V12.500M1.500 11H4.500" stroke="#1f1f1f" stroke-width="1"/><path d="M7.500 1H14M7.500 3.500H14M7.500 6H14M7.500 9H14M7.500 11.500H14M7.500 14H14" stroke="#d6d6d6" stroke-width="1" stroke-dasharray="5 1"/></svg>
<div class="r" style="left:940px;top:485px;width:23px;height:22px;background:#333333;border:1px solid #7160e8;"></div>
<span class="t" style="left:944px;top:488px;font-size:8px;line-height:8.500px;color:#1f1f1f;font-weight:bold;"><span style="background:#d8d8d8;padding:0 1px;">A</span><br><span style="background:#d8d8d8;padding:0 1px;">Z</span></span>
<svg class="r" style="left:953px;top:489px;" width="8" height="14" viewBox="0 0 8 14"><path d="M4 0V11M0.500 7.500L4 11.500L7.500 7.500" fill="none" stroke="#3aa0f0" stroke-width="2"/></svg>
<div class="r" style="left:966px;top:486px;width:1px;height:20px;background:#444444;"></div>
<div class="r" style="left:969px;top:485px;width:23px;height:22px;background:#333333;border:1px solid #7160e8;"></div>
<svg class="r" style="left:972px;top:488px;" width="17" height="17" viewBox="0 0 17 17"><path d="M5.500 1.500H11.500L15 5V15H8" fill="none" stroke="#dcdcdc" stroke-width="1.200"/><path d="M11.500 1.500V5H15" fill="none" stroke="#dcdcdc" stroke-width="1"/><path d="M2 4C1 6 2 8 3.500 8.500V15.500H6.500V8.500C8 8 9 6 8 4V6.500H2Z" fill="#e6e6e6"/></svg>
<svg class="r" style="left:996px;top:488px;" width="15" height="17" viewBox="0 0 15 17"><path d="M6 0.500H13L9.500 6.500H14L3 16.500L6.500 9H2Z" fill="#f4b06a" stroke="#ffffff" stroke-width="0.900"/></svg>
<div class="r" style="left:1018px;top:486px;width:1px;height:20px;background:#444444;"></div>
<svg class="r" style="left:1023px;top:487px;" width="18" height="18" viewBox="0 0 18 18"><path d="M12 1C9 1 7.500 3.500 8.300 6L1 13.500V16.500H4.500L11.500 9.500C14.500 10.300 17 8.500 17 5.500L14 8L11.500 7L10.500 4.500L13 1.500Z" fill="#8c8c8c"/></svg>
<div class="r" style="left:914px;top:510px;width:402px;height:125px;background:#2a2a2a;"></div>
<div class="r" style="left:914px;top:510px;width:15px;height:125px;background:#262626;"></div>
<div class="r" style="left:914px;top:510px;width:402px;height:125px;overflow:hidden;">
<div class="r" style="left:15.0px;top:1px;width:187px;height:18px;background:#1f1f1f;"></div>
<div class="r" style="left:203.0px;top:1px;width:199px;height:18px;background:#1f1f1f;"></div>
<span class="t" style="left:19.3px;top:4px;font-size:12px;color:#f4f4f4;letter-spacing:-0.082px;">Locked</span>
<span class="t" style="left:206.5px;top:4px;font-size:12px;color:#f4f4f4;letter-spacing:-0.768px;">False</span>
<div class="r" style="left:15.0px;top:20px;width:187px;height:18px;background:#1f1f1f;"></div>
<div class="r" style="left:203.0px;top:20px;width:199px;height:18px;background:#1f1f1f;"></div>
<span class="t" style="left:19.3px;top:23px;font-size:12px;color:#f4f4f4;letter-spacing:0.038px;">MainMenuStrip</span>
<span class="t" style="left:206.5px;top:23px;font-size:12px;color:#f4f4f4;letter-spacing:-0.031px;">(none)</span>
<div class="r" style="left:15.0px;top:39px;width:187px;height:18px;background:#1f1f1f;"></div>
<div class="r" style="left:203.0px;top:39px;width:199px;height:18px;background:#1f1f1f;"></div>
<span class="t" style="left:19.3px;top:42px;font-size:12px;color:#f4f4f4;letter-spacing:-0.105px;">MaximizeBox</span>
<span class="t" style="left:206.5px;top:42px;font-size:12px;color:#f4f4f4;letter-spacing:-0.557px;">True</span>
<div class="r" style="left:15.0px;top:58px;width:187px;height:18px;background:#1f1f1f;"></div>
<div class="r" style="left:203.0px;top:58px;width:199px;height:18px;background:#1f1f1f;"></div>
<span class="t" style="left:19.3px;top:61px;font-size:12px;color:#f4f4f4;letter-spacing:-0.059px;">MaximumSize</span>
<span class="t" style="left:206.5px;top:61px;font-size:12px;color:#f4f4f4;letter-spacing:-0.504px;">0, 0</span>
<svg class="r" style="left:3.0px;top:62px;" width="9" height="9" viewBox="0 0 9 9"><rect x="0.500" y="0.500" width="8" height="8" fill="#1f1f1f" stroke="#e0e0e0"/><path d="M2 4.500H7M4.500 2V7" stroke="#e0e0e0" stroke-width="1"/></svg>
<div class="r" style="left:15.0px;top:77px;width:187px;height:18px;background:#1f1f1f;"></div>
<div class="r" style="left:203.0px;top:77px;width:199px;height:18px;background:#1f1f1f;"></div>
<span class="t" style="left:19.3px;top:80px;font-size:12px;color:#f4f4f4;letter-spacing:0.143px;">MdiChildrenMinimizedAnchorBott</span>
<span class="t" style="left:206.5px;top:80px;font-size:12px;color:#f4f4f4;letter-spacing:-0.557px;">True</span>
<div class="r" style="left:15.0px;top:96px;width:187px;height:18px;background:#1f1f1f;"></div>
<div class="r" style="left:203.0px;top:96px;width:199px;height:18px;background:#1f1f1f;"></div>
<span class="t" style="left:19.3px;top:99px;font-size:12px;color:#f4f4f4;letter-spacing:0.017px;">MinimizeBox</span>
<span class="t" style="left:206.5px;top:99px;font-size:12px;color:#f4f4f4;letter-spacing:-0.557px;">True</span>
<div class="r" style="left:15.0px;top:115px;width:187px;height:18px;background:#1f1f1f;"></div>
<div class="r" style="left:203.0px;top:115px;width:199px;height:18px;background:#1f1f1f;"></div>
<span class="t" style="left:19.3px;top:118px;font-size:12px;color:#f4f4f4;letter-spacing:0.063px;">MinimumSize</span>
<span class="t" style="left:206.5px;top:118px;font-size:12px;color:#f4f4f4;letter-spacing:-0.504px;">0, 0</span>
<svg class="r" style="left:3.0px;top:119px;" width="9" height="9" viewBox="0 0 9 9"><rect x="0.500" y="0.500" width="8" height="8" fill="#1f1f1f" stroke="#e0e0e0"/><path d="M2 4.500H7M4.500 2V7" stroke="#e0e0e0" stroke-width="1"/></svg>
</div>
<div class="r" style="left:914px;top:509px;width:420px;height:1px;background:#2d2d2d;"></div>
<div class="r" style="left:914px;top:635px;width:420px;height:1px;background:#333333;"></div>
<div class="r" style="left:1316px;top:510px;width:18px;height:125px;background:#2e2e2e;"></div>
<svg class="r" style="left:1320px;top:516px;" width="9" height="5" viewBox="0 0 9 5"><path d="M0 5H9L4.500 0Z" fill="#999999"/></svg>
<svg class="r" style="left:1320px;top:624px;" width="9" height="5" viewBox="0 0 9 5"><path d="M0 0H9L4.500 5Z" fill="#999999"/></svg>
<div class="r" style="left:1320px;top:576px;width:9px;height:17px;background:#4d4d4d;"></div>
<span class="t" style="left:920.6px;top:644px;font-size:12px;color:#ffffff;letter-spacing:-0.283px;font-weight:bold;">ToolTip on toolTip1</span>
<span class="t" style="left:920.6px;top:662px;font-size:12px;color:#f2f2f2;letter-spacing:-0.095px;">Determina la información sobre herramientas que se muestra cuando se</span>
<span class="t" style="left:920.6px;top:677px;font-size:12px;color:#f2f2f2;letter-spacing:-0.140px;">mantiene el mouse sobre el control.</span>
<div class="r" style="left:0px;top:705px;width:1366px;height:23px;background:#424242;"></div>
<svg class="r" style="left:4px;top:709px;" width="16" height="16" viewBox="0 0 16 16"><path d="M0.600 0.600H15.400V12.400H10L8 14.800L6 12.400H0.600Z" fill="#555555" stroke="#e6e6e6" stroke-width="1.100"/></svg>
<span class="t" style="left:28.2px;top:711px;font-size:12px;color:#ffffff;letter-spacing:-0.169px;">Listo</span>
<svg class="r" style="left:559px;top:708px;" width="16" height="16" viewBox="0 0 16 16"><path d="M4.500 0V9M0 4.500H9" stroke="#e6e6e6" stroke-width="1"/><rect x="4.500" y="4.500" width="10" height="10" fill="none" stroke="#d0d0d0" stroke-width="1" stroke-dasharray="1 1"/></svg>
<span class="t" style="left:579.0px;top:711px;font-size:12px;color:#f4f4f4;letter-spacing:-0.516px;">784 , 129</span>
<svg class="r" style="left:719px;top:708px;" width="16" height="17" viewBox="0 0 16 17"><rect x="5.500" y="6.500" width="9" height="9" fill="none" stroke="#d0d0d0" stroke-width="1" stroke-dasharray="1 1"/><path d="M5.500 2.500H14.500M12.500 0.500L14.500 2.500L12.500 4.500M7.500 0.500L5.500 2.500L7.500 4.500" fill="none" stroke="#6db3ef" stroke-width="1"/><path d="M2.500 6.500V14.500M0.500 12.500L2.500 14.500L4.500 12.500" fill="none" stroke="#6db3ef" stroke-width="1"/><path d="M0 16.500H15" stroke="#e6e6e6" stroke-width="1"/></svg>
<span class="t" style="left:739.0px;top:711px;font-size:12px;color:#f4f4f4;letter-spacing:-0.563px;">0 x 1</span>
<svg class="r" style="left:913px;top:709px;" width="12" height="14" viewBox="0 0 12 14"><path d="M6 14V1M1 6L6 1L11 6" fill="none" stroke="#f0f0f0" stroke-width="1.200"/></svg>
<span class="t" style="left:933.2px;top:711px;font-size:12px;color:#ffffff;letter-spacing:0.043px;">Agregar al control de código fuente</span>
<svg class="r" style="left:1127px;top:714px;" width="8" height="4" viewBox="0 0 8 4"><path d="M0 4H8L4 0Z" fill="#f0f0f0"/></svg>
<svg class="r" style="left:1158px;top:709px;" width="14" height="14" viewBox="0 0 14 14"><path d="M0.600 0.600H13.400V4H0.600ZM2 4V13.400H12V4M5 6.500V9.500H9V6.500" fill="none" stroke="#f0f0f0" stroke-width="1.200"/></svg>
<span class="t" style="left:1179.0px;top:711px;font-size:12px;color:#ffffff;letter-spacing:-0.090px;">Seleccionar repositorio</span>
<svg class="r" style="left:1305px;top:714px;" width="8" height="4" viewBox="0 0 8 4"><path d="M0 4H8L4 0Z" fill="#f0f0f0"/></svg>
<svg class="r" style="left:1335px;top:708px;" width="14" height="16" viewBox="0 0 14 16"><path d="M2 12V7C2 3.500 4 1.500 7 1.500C10 1.500 12 3.500 12 7V12L13.500 13.500H0.500ZM5 14.500C5.500 16 8.500 16 9 14.500" fill="none" stroke="#f0f0f0" stroke-width="1.100"/></svg>
<div class="r" style="left:1342px;top:714px;width:12px;height:12px;border-radius:6px;background:#e8485a;"></div>
<span class="t" style="left:1346.0px;top:717px;font-size:9px;color:#ffffff;letter-spacing:-1.005px;font-weight:bold;">1</span>
<span class="t" style="left:1037.6px;top:652px;font-size:18px;color:rgba(255,255,255,0.31);letter-spacing:0.778px;">Activar Windows</span>
<span class="t" style="left:1037.6px;top:677px;font-size:15px;color:rgba(255,255,255,0.31);letter-spacing:-0.139px;">Ve a Configuración para activar Windows.</span>
<div class="r" style="left:0px;top:728px;width:1366px;height:40px;background:#25211f;background:linear-gradient(90deg,#2b353a 0px,#2b353a 48px,#232a30 392px,#2a2428 412px,#2b2424 560px,#272a2b 640px,#2a2e2e 700px,#33332b 770px,#38362a 860px,#33322a 950px,#2b2b25 995px,#1f1f1f 1042px,#1c1c22 1070px,#1a1a25 1366px);"></div>
<svg class="r" style="left:16px;top:740px;" width="17" height="17" viewBox="0 0 17 17"><path d="M0 2.400L7 1.400V8H0ZM8 1.250L17 0V8H8ZM0 9H7V15.600L0 14.600ZM8 9H17V17L8 15.750Z" fill="#ffffff"/></svg>
<div class="r" style="left:48px;top:728px;width:344px;height:40px;background:#f3f3f3;border-bottom:1px solid #b4b4b4;border-top:1px solid #dadada;"></div>
<svg class="r" style="left:60px;top:740px;" width="17" height="17" viewBox="0 0 17 17"><circle cx="10.500" cy="6" r="5" fill="none" stroke="#2a2a2a" stroke-width="1.400"/><path d="M7 9.700L0.800 16" stroke="#2a2a2a" stroke-width="1.500"/></svg>
<span class="t" style="left:88.8px;top:741px;font-size:15px;color:#3c3c3c;letter-spacing:-0.265px;">Escribe aquí para buscar</span>
<svg class="r" style="left:314px;top:729px;" width="78" height="39" viewBox="314 729 78 39"><defs><linearGradient id="hm" x1="0" y1="0" x2="0" y2="1"><stop offset="0" stop-color="#2568cc"/><stop offset="0.45" stop-color="#56b6da"/><stop offset="0.75" stop-color="#2a62c8"/><stop offset="1" stop-color="#1c46b0"/></linearGradient></defs><path d="M329.500 744C329.500 752 327 760 324.300 768" stroke="#d9a13c" stroke-width="4.200" fill="none"/><path d="M376.800 744C376.800 752 379.500 760 382 768" stroke="#d9a13c" stroke-width="4.200" fill="none"/><path d="M329 748.500L335.500 756.500M329 748.500L339.500 752.500M377.500 748.500L368 756.500M377.500 748.500L366.500 752.500" stroke="#2a5fc0" stroke-width="0.700" fill="none"/><path d="M339.500 752.300C348 755.300 358 755.300 368.800 751.500L367.500 756.500C362 762.500 356 765 351.500 765C346 765 340 761.500 335.300 756.500Z" fill="url(#hm)"/><path d="M329.5 742.5Q324.7 735.8 321.5 735" fill="none" stroke="#3f8f30" stroke-width="3.8" stroke-linecap="round"/><path d="M329.5 742.5Q332.5 734.0 334.5 732.5" fill="none" stroke="#3f8f30" stroke-width="3.8" stroke-linecap="round"/><path d="M329.5 742.5Q336.7 740.3 341.5 741.5" fill="none" stroke="#3f8f30" stroke-width="3.8" stroke-linecap="round"/><path d="M329.5 742.5Q322.0 741.8 317 745" fill="none" stroke="#3f8f30" stroke-width="3.8" stroke-linecap="round"/><path d="M329.5 742.5Q326.2 743.2 324 750" fill="none" stroke="#3f8f30" stroke-width="3.8" stroke-linecap="round"/><path d="M329.5 742.5Q334.0 742.6 337 748" fill="none" stroke="#3f8f30" stroke-width="3.8" stroke-linecap="round"/><path d="M329.5 742.5Q324.7 735.8 321.5 735" fill="none" stroke="#7db53c" stroke-width="1.4" stroke-linecap="round"/><path d="M329.5 742.5Q332.5 734.0 334.5 732.5" fill="none" stroke="#7db53c" stroke-width="1.4" stroke-linecap="round"/><path d="M329.5 742.5Q336.7 740.3 341.5 741.5" fill="none" stroke="#7db53c" stroke-width="1.4" stroke-linecap="round"/><path d="M329.5 742.5Q322.0 741.8 317 745" fill="none" stroke="#7db53c" stroke-width="1.4" stroke-linecap="round"/><path d="M329.5 742.5Q326.2 743.2 324 750" fill="none" stroke="#7db53c" stroke-width="1.4" stroke-linecap="round"/><path d="M329.5 742.5Q334.0 742.6 337 748" fill="none" stroke="#7db53c" stroke-width="1.4" stroke-linecap="round"/><path d="M377 741.5Q377.6 733.0 378 731.5" fill="none" stroke="#3f8f30" stroke-width="3.4" stroke-linecap="round"/><path d="M377 741.5Q372.2 736.1 369 736" fill="none" stroke="#3f8f30" stroke-width="3.4" stroke-linecap="round"/><path d="M377 741.5Q370.1 740.0 365.5 741.5" fill="none" stroke="#3f8f30" stroke-width="3.4" stroke-linecap="round"/><path d="M377 741.5Q381.8 740.1 385 742" fill="none" stroke="#3f8f30" stroke-width="3.4" stroke-linecap="round"/><path d="M377 741.5Q380.6 736.1 383 736" fill="none" stroke="#3f8f30" stroke-width="3.4" stroke-linecap="round"/><path d="M377 741.5Q373.4 742.2 371 749" fill="none" stroke="#3f8f30" stroke-width="3.4" stroke-linecap="round"/><path d="M377 741.5Q380.0 742.0 382 748" fill="none" stroke="#3f8f30" stroke-width="3.4" stroke-linecap="round"/><path d="M377 741.5Q377.6 733.0 378 731.5" fill="none" stroke="#7db53c" stroke-width="1.2" stroke-linecap="round"/><path d="M377 741.5Q372.2 736.1 369 736" fill="none" stroke="#7db53c" stroke-width="1.2" stroke-linecap="round"/><path d="M377 741.5Q370.1 740.0 365.5 741.5" fill="none" stroke="#7db53c" stroke-width="1.2" stroke-linecap="round"/><path d="M377 741.5Q381.8 740.1 385 742" fill="none" stroke="#7db53c" stroke-width="1.2" stroke-linecap="round"/><path d="M377 741.5Q380.6 736.1 383 736" fill="none" stroke="#7db53c" stroke-width="1.2" stroke-linecap="round"/><path d="M377 741.5Q373.4 742.2 371 749" fill="none" stroke="#7db53c" stroke-width="1.2" stroke-linecap="round"/><path d="M377 741.5Q380.0 742.0 382 748" fill="none" stroke="#7db53c" stroke-width="1.2" stroke-linecap="round"/><circle cx="328.800" cy="743.600" r="1.600" fill="#c8821a"/><circle cx="331.300" cy="741.800" r="1.600" fill="#d08c20"/><circle cx="377" cy="742" r="1.700" fill="#c8821a"/><rect x="328.300" y="747.500" width="2.500" height="1.600" fill="#2a5fc0"/><rect x="375.800" y="747.500" width="2.500" height="1.600" fill="#2a5fc0"/></svg>
<svg class="r" style="left:407px;top:739px;" width="18" height="17" viewBox="0 0 18 17"><path d="M1.200 3.500V1.200H11.200V3.500M1.200 13.500V15.800H11.200V13.500" fill="none" stroke="#ffffff" stroke-width="1.300"/><rect x="1.200" y="5.600" width="10" height="5.800" fill="none" stroke="#ffffff" stroke-width="1.300"/><path d="M15.600 0.500V4M15.600 9V16.500" stroke="#ffffff" stroke-width="1.300"/><rect x="14" y="4.500" width="3.200" height="3.500" fill="#ffffff"/></svg>
<svg class="r" style="left:453px;top:736px;" width="24" height="23" viewBox="0 0 24 23"><path d="M0 7L12 0L24 7V9H0Z" fill="#1464bf"/><rect x="0" y="7" width="24" height="16" fill="#2aa9ec"/><path d="M0 23L24 23L24 9L12 15Z" fill="#1f8fe0"/><path d="M0 7V23L12 15Z" fill="#2ba0ea"/><path d="M12 14.500L24 23H0Z" fill="#35b8f2" opacity="0.600"/><path d="M2.500 8H21.500L12 14.300Z" fill="#f4f4f4"/></svg>
<svg class="r" style="left:499px;top:736px;" width="24" height="24" viewBox="0 0 24 24"><defs><linearGradient id="eg1" x1="0.200" y1="0.800" x2="1" y2="0.100"><stop offset="0" stop-color="#2f9de8"/><stop offset="0.550" stop-color="#33c0e0"/><stop offset="1" stop-color="#66e05a"/></linearGradient></defs><path d="M0.300 11.500C0.700 5 5.800 0.300 12 0.300C18.800 0.300 23.700 5.200 23.700 11.200C23.700 15 21 17 18 17C15.700 17 14.200 16 14.200 14.700C14.200 13.600 15.300 13.200 15.300 11.700C15.300 9.400 13 8 10.700 8C5.500 8 0.800 11.500 0.300 11.500Z" fill="url(#eg1)"/><path d="M6 13C6 18.500 10 23.200 15.500 23.600C10.500 24.500 3.500 22.500 1.200 16C0.200 13 0.500 10.500 2.300 8.800C4.500 7.200 7.500 7.300 9.500 8C7.300 9 6 10.800 6 13Z" fill="#1556a6"/><path d="M8.300 15.500C10 20.500 16 22.500 21.500 19.500C19 23 12.500 25 8 21C6.500 19.500 6.800 16.500 8.300 15.500Z" fill="#1180d8"/><path d="M2.300 8.800C4.500 7.200 8 7.200 10 8C7 9 5 12 5.500 15C3 14 1 12 2.300 8.800Z" fill="#1c6fc4"/></svg>
<div class="r" style="left:493px;top:766px;width:37px;height:2px;background:#76b9ed;"></div>
<svg class="r" style="left:546px;top:738px;" width="22" height="19" viewBox="0 0 22 19"><path d="M0 1C0 0.400 0.400 0 1 0H8.500L10 2H0Z" fill="#e5a50a"/><path d="M0 2H21C21.600 2 22 2.400 22 3V18C22 18.600 21.600 19 21 19H1C0.400 19 0 18.600 0 18Z" fill="#fcd462"/><path d="M0 2H22V4H0Z" fill="#f7c94a"/><path d="M4 10.500H18V19H4Z" fill="#3a92e0"/><path d="M4 10.500H18V12H4Z" fill="#5aaaf0"/><path d="M8 14H14V19H8Z" fill="#fcd462"/></svg>
<svg class="r" style="left:591px;top:736px;" width="24" height="24" viewBox="0 0 24 24"><circle cx="12" cy="12" r="12" fill="#ffffff"/><path d="M12 0A12 12 0 0 1 22.400 6H12A6 6 0 0 0 6.800 9L1.600 6A12 12 0 0 1 12 0Z" fill="#e33b2e"/><path d="M22.400 6A12 12 0 0 1 11.600 24L17.200 15A6 6 0 0 0 17.200 9L17 6Z" fill="#fbc116"/><path d="M1.600 6L6.800 15A6 6 0 0 0 12.400 18L11.600 24A12 12 0 0 1 1.600 6Z" fill="#2ba24c"/><path d="M11.600 24L17.200 15A6 6 0 0 1 12 18L8.500 17.500Z" fill="#fbc116"/><circle cx="12" cy="12" r="5.500" fill="#ffffff"/><circle cx="12" cy="12" r="4.400" fill="#3f86f0"/></svg>
<svg class="r" style="left:637px;top:736px;" width="24" height="24" viewBox="0 0 24 24"><circle cx="12" cy="12" r="12" fill="#030303"/><path d="M12.800 5V14.800A2.500 2.500 0 1 1 10.600 12.300" fill="none" stroke="#25f4ee" stroke-width="2.300" transform="translate(-0.800,-0.400)"/><path d="M12.800 5V14.800A2.500 2.500 0 1 1 10.600 12.300M12.800 5C13 7.500 15 9 17.200 9.100" fill="none" stroke="#fe2c55" stroke-width="2.300" transform="translate(0.800,0.400)"/><path d="M12.800 5V14.800A2.500 2.500 0 1 1 10.600 12.300M12.800 5C13 7.500 15 9 17.200 9.100" fill="none" stroke="#ffffff" stroke-width="2.300"/></svg>
<div class="r" style="left:683px;top:736px;width:24px;height:24px;border-radius:9px;background:linear-gradient(#2f83fa,#0b4fe6);"></div>
<span class="t" style="left:686.3px;top:740px;font-size:14px;color:#ffffff;letter-spacing:-0.874px;font-weight:bold;">zm</span>
<svg class="r" style="left:730px;top:736px;" width="23" height="23" viewBox="0 0 23 23"><path d="M12 3H21.500C22 3 22.500 3.500 22.500 4V18.500C22.500 19 22 19.500 21.500 19.500H12Z" fill="#ffffff"/><path d="M14 5.500H21M14 7.700H21M14 9.900H21M14 12.100H21M14 14.300H21M14 16.500H21" stroke="#2b5fad" stroke-width="1.200"/><path d="M0 1.800L13.200 0V22.500L0 20.700Z" fill="#2a5caa"/></svg>
<span class="t" style="left:732.0px;top:744px;font-size:10px;color:#ffffff;letter-spacing:-0.839px;font-weight:bold;">W</span>
<svg class="r" style="left:776px;top:736px;" width="23" height="23" viewBox="0 0 23 23"><path d="M12 3H21.500C22 3 22.500 3.500 22.500 4V18.500C22.500 19 22 19.500 21.500 19.500H12Z" fill="#fdf1ec"/><circle cx="17.800" cy="8.200" r="3.200" fill="none" stroke="#d24625" stroke-width="1.300"/><path d="M17.800 5V8.200H21" stroke="#d24625" stroke-width="1.300" fill="none"/><path d="M14 14.300H21M14 16.500H21" stroke="#d24625" stroke-width="1.200"/><path d="M0 1.800L13.200 0V22.500L0 20.700Z" fill="#d24625"/></svg>
<span class="t" style="left:779.2px;top:744px;font-size:10px;color:#ffffff;letter-spacing:-0.470px;font-weight:bold;">P</span>
<svg class="r" style="left:821px;top:736px;" width="24" height="24" viewBox="0 0 24 24"><circle cx="12" cy="12" r="12" fill="#1ed760"/><path d="M5.500 8.300C10 6.800 15.500 7.300 19.500 9.600" stroke="#0c0c0c" stroke-width="2.400" fill="none" stroke-linecap="round"/><path d="M6.200 12.200C10 11.100 14.800 11.500 18.200 13.500" stroke="#0c0c0c" stroke-width="2" fill="none" stroke-linecap="round"/><path d="M6.800 15.800C10 15 13.800 15.300 16.800 17" stroke="#0c0c0c" stroke-width="1.700" fill="none" stroke-linecap="round"/></svg>
<svg class="r" style="left:870px;top:739px;" width="18.5" height="18.5" viewBox="0 0 20 20"><circle cx="10" cy="10" r="5.600" fill="none" stroke="#ffffff" stroke-width="3.200"/><g stroke="#ffffff" stroke-width="3.800"><path d="M10 0.300V4M10 16V19.700M0.300 10H4M16 10H19.700M3.100 3.100L5.700 5.700M14.300 14.300L16.900 16.900M16.900 3.100L14.300 5.700M5.700 14.300L3.100 16.900"/></g><circle cx="10" cy="10" r="3.400" fill="#37352a"/></svg>
<div class="r" style="left:914px;top:737px;width:22px;height:20px;background:#26093f;border:1.500px solid #cf9cf7;"></div>
<span class="t" style="left:918.0px;top:740px;font-size:13px;color:#d9a8ff;letter-spacing:-0.950px;">Ae</span>
<svg class="r" style="left:960px;top:737px;" width="22" height="22" viewBox="0 0 22 22"><path d="M0 4C0 1.500 1.500 0 4 0H18C20.500 0 22 1.500 22 4V18H0Z" fill="#15334b"/><path d="M0 17H22V17.500C22 20.500 17 22 11 22C5 22 0 20.500 0 17.500Z" fill="#f4f4f4"/><path d="M7 11.300L12.300 6L15.300 9L10 14.300Z" fill="#4fe0c4"/><path d="M8 4.500L10 2.500L12 4.500L10 6.500Z" fill="#ffffff"/><rect x="9" y="18.800" width="4" height="1.500" rx="0.700" fill="#15334b"/></svg>
<div class="r" style="left:995px;top:728px;width:45px;height:40px;background:#57564d;"></div>
<div class="r" style="left:995px;top:766px;width:45px;height:2px;background:#76b9ed;"></div>
<svg class="r" style="left:1005px;top:736px;" width="25" height="24" viewBox="0 0 25 24"><path d="M17.500 0.300L24.300 3.300V20.700L17.500 23.700L7.500 14.200L3 17.800L0.500 16.600V7.400L3 6.200L7.500 9.800Z" fill="#a276e0"/><path d="M17.500 0.300L24.300 3.300V20.700L17.500 23.700Z" fill="#c9a2f8"/><path d="M17.500 7L11 12L17.500 17Z" fill="#57564d"/><path d="M3 9.500V14.500L5.800 12Z" fill="#57564d"/><path d="M0.500 7.400L3 6.200L17.500 23.700L7.500 14.200L3 17.800L0.500 16.600Z" fill="#7b4fc2" opacity="0.600"/></svg>
<div class="r" style="left:1068px;top:738px;width:20px;height:20px;border-radius:10px;background:radial-gradient(circle at 40% 30%,#ffa040 0%,#f76b1c 65%,#e8541a 100%);"></div>
<span class="t" style="left:1098.7px;top:741px;font-size:14px;color:#ffffff;letter-spacing:-0.745px;">25°C</span>
<svg class="r" style="left:1153px;top:744px;" width="13" height="8" viewBox="0 0 13 8"><path d="M0.700 7.200L6.500 1.200L12.300 7.200" fill="none" stroke="#ffffff" stroke-width="1.300"/></svg>
<svg class="r" style="left:1175px;top:742px;" width="15" height="12" viewBox="0 0 15 12"><path d="M0.600 3.800H3L6.200 0.800V11.200L3 8.200H0.600Z" fill="none" stroke="#ffffff" stroke-width="1.100"/><path d="M9.500 4L14 8.500M14 4L9.500 8.500" stroke="#ffffff" stroke-width="1.100"/></svg>
<svg class="r" style="left:1199px;top:744px;" width="17" height="9" viewBox="0 0 17 9"><rect x="0.600" y="0.600" width="13.400" height="7.800" fill="none" stroke="#ffffff" stroke-width="1.100"/><rect x="2" y="2" width="6.500" height="5" fill="#ffffff"/><rect x="14.500" y="2.500" width="1.500" height="4" fill="#ffffff"/></svg>
<svg class="r" style="left:1225px;top:742px;" width="14" height="13" viewBox="0 0 14 13"><circle cx="11.800" cy="11.200" r="1.400" fill="#ffffff"/><path d="M8.200 12.300A4.200 4.200 0 0 1 12.600 7.400" fill="none" stroke="#ffffff" stroke-width="1.100"/><path d="M5.200 12.300A7.200 7.200 0 0 1 12.600 4.400" fill="none" stroke="#b0b0b0" stroke-width="1.100"/><path d="M2.200 12.300A10.200 10.200 0 0 1 12.600 1.400" fill="none" stroke="#8a8a8a" stroke-width="1.100"/></svg>
<span class="t" style="left:1250.0px;top:733px;font-size:12px;color:#ffffff;letter-spacing:-0.394px;">08:41 a. m.</span>
<span class="t" style="left:1249.0px;top:751px;font-size:12px;color:#ffffff;letter-spacing:-0.226px;">27/05/2024</span>
<svg class="r" style="left:1325px;top:740px;" width="17" height="16" viewBox="0 0 17 16"><path d="M0.600 0.600H15.400V11.400H10.500L8 14.500L5.500 11.400H0.600Z" fill="none" stroke="#ffffff" stroke-width="1.200"/></svg>
</body></html>
